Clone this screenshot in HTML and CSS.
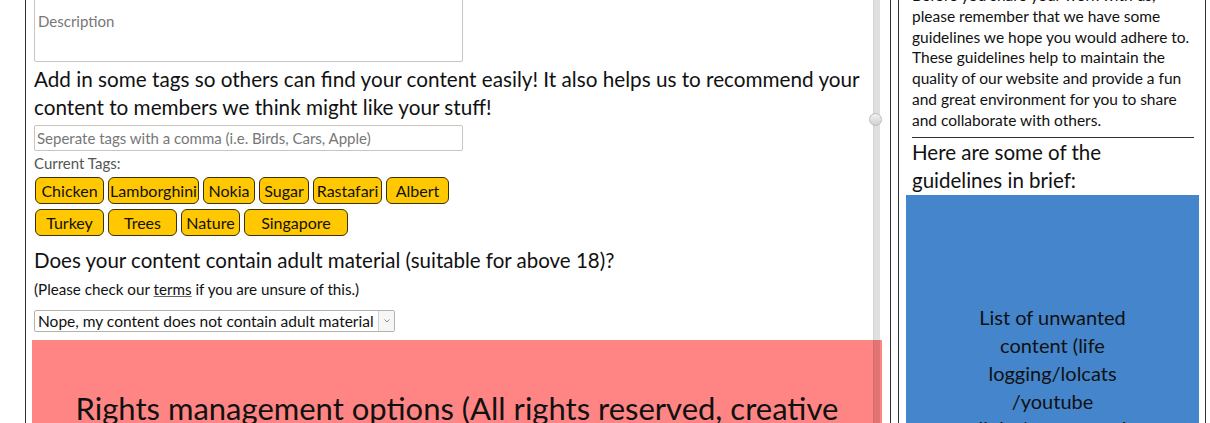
FILE: index.html
```html
<!DOCTYPE html>
<html>
<head>
<meta charset="utf-8">
<link rel="stylesheet" href="styles.css">
</head>
<body>
<div class="page">
  <main class="main">
    <div class="scroll-track"></div>
    <div class="scroll-thumb"></div>
    <div class="textarea">Description</div>
    <p class="lead">Add in some tags so others can find your content easily! It also helps us to recommend your content to members we think might like your stuff!</p>
    <div class="input">Seperate tags with a comma (i.e. Birds, Cars, Apple)</div>
    <div class="label">Current Tags:</div>
    <div class="tags">
      <span class="tag w69">Chicken</span>
      <span class="tag w91">Lamborghini</span>
      <span class="tag w52">Nokia</span>
      <span class="tag w50">Sugar</span>
      <span class="tag w69">Rastafari</span>
      <span class="tag w63">Albert</span>
    </div>
    <div class="tags">
      <span class="tag w69">Turkey</span>
      <span class="tag w69">Trees</span>
      <span class="tag w59">Nature</span>
      <span class="tag w104">Singapore</span>
    </div>
    <p class="question">Does your content contain adult material (suitable for above 18)?</p>
    <p class="note">(Please check our <a href="#" class="link">terms</a> if you are unsure of this.)</p>
    <div class="select">
      <span class="select-text">Nope, my content does not contain adult material</span>
      <span class="select-btn"><svg width="8" height="6" viewBox="0 0 8 6"><path d="M1.5 1.5 L4 4 L6.5 1.5" fill="none" stroke="#888" stroke-width="1"/></svg></span>
    </div>
    <div class="rights">Rights management options (All rights reserved, creative commons, public domain)</div>
  </main>
  <aside class="side">
    <p class="side-text">Before you share your work with us, please remember that we have some guidelines we hope you would adhere to. These guidelines help to maintain the quality of our website and provide a fun and great environment for you to share and collaborate with others.</p>
    <hr class="rule">
    <h2 class="side-head">Here are some of the guidelines in brief:</h2>
    <div class="unwanted">List of unwanted content (life logging/lolcats /youtube links/memes and spam)</div>
  </aside>
</div>
</body>
</html>
```
FILE: styles.css
```css
html, body {
  margin: 0;
  padding: 0;
  background: #fff;
}
body {
  font-family: "Lato", "Open Sans", sans-serif;
  color: #111;
  height: 423px;
  overflow: hidden;
}
.page {
  display: flex;
  align-items: flex-start;
  padding-left: 25px;
  gap: 7px;
}
.main {
  position: relative;
  flex: none;
  width: 856px;
  border-left: 1px solid #333;
  border-right: 1px solid #333;
  padding: 0 0 0 8px;
  margin-top: -20px;
  height: 600px;
}
.scroll-track {
  position: absolute;
  left: 847px;
  top: 0;
  bottom: 0;
  width: 6px;
  background: rgba(0,0,0,0.12);
  border-left: 1px solid rgba(0,0,0,0.05);
  z-index: 2;
}
.scroll-thumb {
  position: absolute;
  left: 843px;
  top: 133px;
  width: 13px;
  height: 13px;
  border-radius: 50%;
  background: linear-gradient(#f2f2f2, #d0d0d0);
  border: 1px solid #bdbdbd;
  box-sizing: border-box;
  z-index: 3;
}
.textarea {
  width: 429px;
  height: 82px;
  box-sizing: border-box;
  border: 1px solid #c9c4be;
  border-radius: 2px;
  padding: 30px 0 0 3px;
  font-size: 15px;
  line-height: 20px;
  color: #777;
}
.lead {
  margin: 3px 0 0;
  font-size: 20.7px;
  line-height: 28px;
  width: 840px;
}
.input {
  margin-top: 4px;
  width: 429px;
  height: 26px;
  box-sizing: border-box;
  border: 1px solid #c9c4be;
  border-radius: 2px;
  padding: 0 0 0 2px;
  font-size: 15px;
  line-height: 24px;
  color: #777;
}
.label {
  margin-top: 3px;
  font-size: 15px;
  line-height: 18px;
  color: #555;
}
.tags {
  display: flex;
  gap: 4px;
  margin-top: 5px;
  margin-left: 1px;
}
.tags + .tags {
  margin-top: 5px;
}
.tag {
  box-sizing: border-box;
  height: 27px;
  background: #ffc800;
  border: 1px solid #3d3300;
  border-radius: 6px;
  font-size: 16px;
  line-height: 25px;
  text-align: center;
  color: #111;
  white-space: nowrap;
}
.w50 { width: 50px; }
.w52 { width: 52px; }
.w59 { width: 59px; }
.w63 { width: 63px; }
.w69 { width: 69px; }
.w91 { width: 91px; }
.w104 { width: 104px; }
.question {
  margin: 10px 0 0;
  font-size: 20.5px;
  line-height: 28px;
}
.note {
  margin: 5px 0 0;
  font-size: 15.2px;
  line-height: 20px;
}
.link {
  color: #111;
  text-decoration: underline;
  text-decoration-color: #666;
}
.select {
  margin-top: 11px;
  width: 361px;
  height: 22px;
  box-sizing: border-box;
  border: 1px solid #b5b1ab;
  border-radius: 2px;
  display: flex;
  align-items: stretch;
  background: #fff;
}
.select-text {
  flex: 1;
  font-size: 15.5px;
  line-height: 20px;
  padding-left: 3px;
  white-space: nowrap;
  overflow: hidden;
}
.select-btn {
  width: 15px;
  border-left: 1px solid #d4d0cb;
  background: #f6f6f6;
  display: flex;
  align-items: center;
  justify-content: center;
}
.rights {
  margin: 8px 0 0 -2px;
  width: 850px;
  height: 200px;
  box-sizing: border-box;
  background: #ff8585;
  font-size: 31px;
  line-height: 40px;
  text-align: center;
  padding: 48px 20px 0;
}
.side {
  flex: none;
  width: 298px;
  border-left: 1px solid #333;
  border-right: 1px solid #333;
  margin-top: -15px;
  height: 600px;
  padding-left: 8px;
}
.side-text {
  margin: 0;
  padding: 0 8px 0 5px;
  font-size: 15.5px;
  line-height: 20.75px;
  color: #111;
}
.rule {
  margin: 7px 11px 0 5px;
  border: 0;
  border-top: 1px solid #333;
  height: 0;
}
.side-head {
  margin: 0;
  padding-left: 5px;
  width: 200px;
  font-size: 20.5px;
  font-weight: normal;
  line-height: 28px;
}
.unwanted {
  margin: 1px 6px 0 -1px;
  height: 400px;
  background: #4485cb;
  font-size: 20px;
  line-height: 27.75px;
  text-align: center;
  padding: 109px 60px 0;
  box-sizing: border-box;
  color: #111;
}
```
